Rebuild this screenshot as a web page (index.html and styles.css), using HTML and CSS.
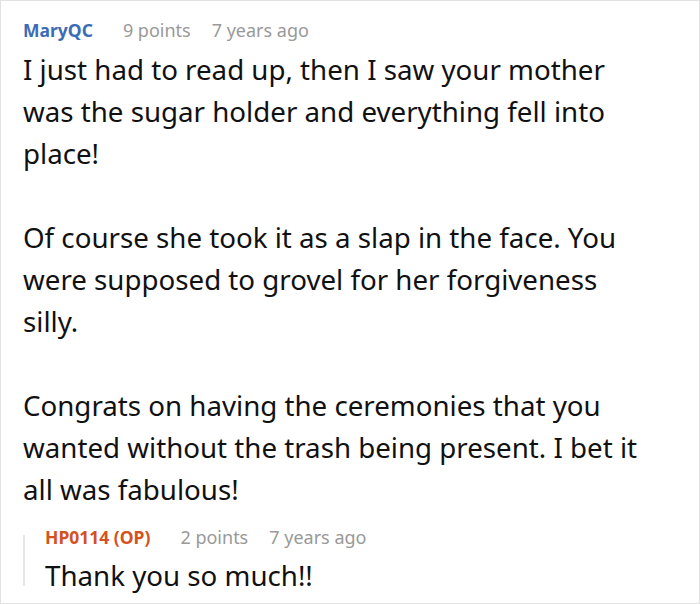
FILE: index.html
```html
<!DOCTYPE html>
<html>
<head>
<meta charset="utf-8">
<link rel="stylesheet" href="styles.css">
</head>
<body>
<div class="frame">
  <div class="comment">
    <div class="meta">
      <span class="author">MaryQC</span>
      <span class="info points">9 points</span>
      <span class="info">7 years ago</span>
    </div>
    <div class="body">
      <p>I just had to read up, then I saw your mother was the sugar holder and everything fell into place!</p>
      <p>Of course she took it as a slap in the face. You were supposed to grovel for her forgiveness silly.</p>
      <p>Congrats on having the ceremonies that you wanted without the trash being present. I bet it all was fabulous!</p>
    </div>
    <div class="reply">
      <div class="meta">
        <span class="author op">HP0114 (OP)</span>
        <span class="info points">2 points</span>
        <span class="info">7 years ago</span>
      </div>
      <div class="body reply-body">
        <p>Thank you so much!!</p>
      </div>
    </div>
  </div>
</div>
</body>
</html>
```

FILE: styles.css
```css
html, body {
  margin: 0;
  padding: 0;
  background: #fff;
}
.frame {
  width: 700px;
  height: 604px;
  box-sizing: border-box;
  border: 1px solid #e2e2e2;
  overflow: hidden;
  font-family: "Noto Sans", "Open Sans", sans-serif;
}
.comment {
  padding: 17px 0 0 22px;
}
.meta {
  display: flex;
  align-items: center;
  height: 24px;
  line-height: 24px;
  font-size: 18px;
  white-space: nowrap;
}
.author {
  font-weight: 700;
  font-size: 17.5px;
  color: #3b6cb7;
}
.author.op {
  color: #d4521e;
}
.info {
  color: #999;
}
.points {
  margin-left: 30px;
  margin-right: 21px;
}
.body {
  margin-top: 6px;
  max-width: 615px;
  font-size: 27.7px;
  line-height: 42px;
  color: #111;
}
.body p {
  margin: 0 0 42px 0;
}
.body p:last-child {
  margin-bottom: 0;
}
.reply {
  margin-top: 15px;
  padding-left: 22px;
  background: linear-gradient(#e6e6e6, #e6e6e6) no-repeat 0 10px / 2px 51px;
}
.reply-body {
  margin-top: 5px;
}
```
